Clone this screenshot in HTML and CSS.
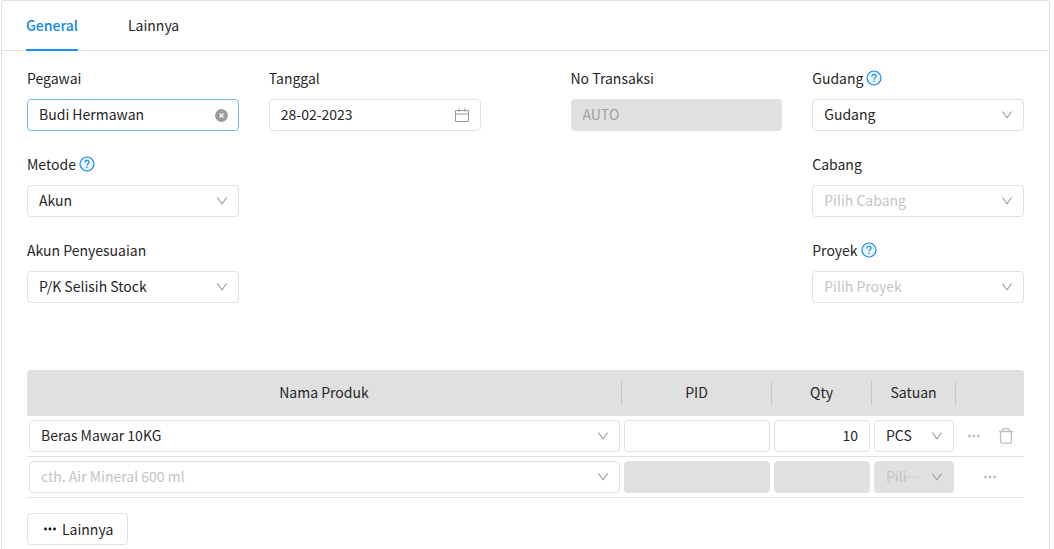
FILE: index.html
```html
<!DOCTYPE html>
<html lang="id">
<head>
<meta charset="utf-8">
<title>Penyesuaian Stok</title>
<link rel="stylesheet" href="styles.css">
</head>
<body>
<svg class="sprite" aria-hidden="true">
  <symbol id="down" viewBox="64 64 896 896"><path d="M884 256h-75c-5.100 0-9.900 2.500-12.900 6.600L512 654.200 227.900 262.600c-3-4.100-7.800-6.600-12.900-6.600h-75c-6.500 0-10.300 7.400-6.500 12.700l352.600 486.100c12.800 17.600 39 17.600 51.700 0l352.600-486.100c3.900-5.300.1-12.700-6.400-12.700z"/></symbol>
  <symbol id="help" viewBox="0 0 16 16"><circle cx="8" cy="8" r="7" fill="#e6f7ff" stroke="#1487e8" stroke-width="1.200"/><path d="M5.900 6.400C5.900 5.200 6.800 4.400 8 4.400s2.100.8 2.100 1.900c0 .9-.6 1.400-1.200 1.700-.6.300-.9.700-.9 1.400" fill="none" stroke="#1487e8" stroke-width="1.100"/><circle cx="8" cy="11.200" r=".75" fill="#1487e8"/></symbol>
  <symbol id="dots" viewBox="0 0 14 14"><circle cx="2.500" cy="7" r="1.400"/><circle cx="7" cy="7" r="1.400"/><circle cx="11.500" cy="7" r="1.400"/></symbol>
</svg>
<main class="card">
  <nav class="tabs" role="tablist">
    <button class="tab tab-active" role="tab" aria-selected="true">General</button>
    <button class="tab" role="tab" aria-selected="false">Lainnya</button>
  </nav>
  <form class="content">
    <div class="fields">
      <div class="column">
        <div class="field">
          <div class="label"><label for="pegawai">Pegawai</label></div>
          <div class="control">
            <input class="box box-focus" id="pegawai" type="text" value="Budi Hermawan">
            <button class="icon-end clear" type="button" aria-label="Hapus pegawai"><svg viewBox="0 0 14 14"><circle cx="7" cy="7" r="7" fill="#9c9c9c"/><path d="M4.900 4.900l4.200 4.200M9.100 4.900l-4.200 4.200" stroke="#fff" stroke-width="1.300"/></svg></button>
          </div>
        </div>
        <div class="field">
          <div class="label"><label for="metode">Metode</label><svg class="help"><use href="#help"/></svg></div>
          <div class="control"><select class="box" id="metode"><option>Akun</option></select><svg class="icon-end arrow"><use href="#down"/></svg></div>
        </div>
        <div class="field">
          <div class="label"><label for="akun">Akun Penyesuaian</label></div>
          <div class="control"><select class="box" id="akun"><option>P/K Selisih Stock</option></select><svg class="icon-end arrow"><use href="#down"/></svg></div>
        </div>
      </div>
      <div class="column">
        <div class="field">
          <div class="label"><label for="tanggal">Tanggal</label></div>
          <div class="control">
            <input class="box" id="tanggal" type="text" value="28-02-2023">
            <svg class="icon-end calendar" viewBox="0 0 14 14"><path d="M.5 2.500h13v11H.5zM.5 6h13M4 .2v3.600M10 .2v3.600" fill="none" stroke="#999" stroke-width="1"/></svg>
          </div>
        </div>
      </div>
      <div class="column column-third">
        <div class="field">
          <div class="label"><label for="nomor">No Transaksi</label></div>
          <div class="control"><input class="box" id="nomor" type="text" value="AUTO" disabled></div>
        </div>
      </div>
      <div class="column">
        <div class="field">
          <div class="label"><label for="gudang">Gudang</label><svg class="help"><use href="#help"/></svg></div>
          <div class="control"><select class="box" id="gudang"><option>Gudang</option></select><svg class="icon-end arrow"><use href="#down"/></svg></div>
        </div>
        <div class="field">
          <div class="label"><label for="cabang">Cabang</label></div>
          <div class="control"><select class="box box-empty" id="cabang"><option>Pilih Cabang</option></select><svg class="icon-end arrow"><use href="#down"/></svg></div>
        </div>
        <div class="field">
          <div class="label"><label for="proyek">Proyek</label><svg class="help"><use href="#help"/></svg></div>
          <div class="control"><select class="box box-empty" id="proyek"><option>Pilih Proyek</option></select><svg class="icon-end arrow"><use href="#down"/></svg></div>
        </div>
      </div>
    </div>

    <table class="items">
      <colgroup><col><col class="col-pid"><col class="col-qty"><col class="col-unit"><col class="col-actions"></colgroup>
      <thead>
        <tr><th><div class="head">Nama Produk</div></th><th><div class="head">PID</div></th><th><div class="head">Qty</div></th><th><div class="head">Satuan</div></th><th></th></tr>
      </thead>
      <tbody>
        <tr>
          <td><div class="control"><select class="box" aria-label="Nama Produk"><option>Beras Mawar 10KG</option></select><svg class="icon-end arrow"><use href="#down"/></svg></div></td>
          <td><div class="control"><input class="box" type="text" aria-label="PID"></div></td>
          <td><div class="control"><input class="box box-number" type="text" value="10" aria-label="Qty"></div></td>
          <td><div class="control"><select class="box box-unit" aria-label="Satuan"><option>PCS</option></select><svg class="icon-end arrow"><use href="#down"/></svg></div></td>
          <td><div class="actions">
            <button class="action" type="button" aria-label="Opsi baris"><svg class="dots"><use href="#dots"/></svg></button>
            <button class="action" type="button" aria-label="Hapus baris"><svg class="trash" viewBox="0 0 14 16"><path d="M0 3.500h14M3.700 3.500V2q0-1.300 1.300-1.300h4q1.300 0 1.300 1.300v1.500M1.600 3.500v10q0 1.700 1.700 1.700h7.400q1.700 0 1.700-1.700v-10" fill="none" stroke="#bfbfbf" stroke-width="1.300"/></svg></button>
          </div></td>
        </tr>
        <tr>
          <td><div class="control"><select class="box box-empty" aria-label="Nama Produk"><option>cth. Air Mineral 600 ml</option></select><svg class="icon-end arrow"><use href="#down"/></svg></div></td>
          <td><div class="control"><input class="box" type="text" aria-label="PID" disabled></div></td>
          <td><div class="control"><input class="box" type="text" aria-label="Qty" disabled></div></td>
          <td><div class="control"><select class="box box-unit box-empty" aria-label="Satuan" disabled><option>Pilih Satuan</option></select><svg class="icon-end arrow"><use href="#down"/></svg></div></td>
          <td><div class="actions"><button class="action" type="button" aria-label="Opsi baris"><svg class="dots"><use href="#dots"/></svg></button></div></td>
        </tr>
      </tbody>
    </table>
    <button class="more" type="button"><svg class="dots"><use href="#dots"/></svg>Lainnya</button>
  </form>
</main>
</body>
</html>
```

FILE: styles.css
```css
* { box-sizing: border-box; }
body {
  margin: 0 4px 0 1px;
  background: #fff;
  color: #262626;
  font: 14px/22px "Noto Sans CJK KR", "Noto Sans", sans-serif;
}
button, input, select { font: inherit; color: inherit; }
button { cursor: pointer; }
svg { display: block; }
.sprite { position: absolute; width: 0; height: 0; }

.card {
  min-height: 100vh;
  border: 1px solid #e0e0e0;
  border-bottom: 0;
  border-radius: 4px 4px 0 0;
}
.tabs {
  display: flex;
  gap: 50px;
  padding: 0 24px;
  border-bottom: 1px solid #e0e0e0;
}
.tab {
  height: 50px;
  margin-bottom: -1px;
  padding: 0;
  border: 0;
  border-bottom: 2px solid transparent;
  background: none;
}
.tab-active { color: #1487e8; border-color: #1890ff; font-weight: 500; }

.content { padding: 16px 25px 3px; }
.fields {
  display: grid;
  grid-template-columns: 1fr 1fr 30px 1fr 1fr;
  gap: 30px;
  margin-bottom: 67px;
}
.column { display: flex; flex-direction: column; gap: 22px; min-width: 0; }
.column-third { grid-column: 4; }
.label { display: flex; align-items: center; gap: 3px; margin-bottom: 10px; }
.help { width: 16px; height: 16px; }

.control { display: grid; grid-template-columns: minmax(0, 1fr); align-items: center; }
.control > * { grid-area: 1 / 1; }
.box {
  appearance: none;
  width: 100%;
  height: 32px;
  margin: 0;
  padding: 0 11px 2px;
  border: 1px solid #e0e0e0;
  border-radius: 4px;
  background: #fff;
  outline: 0;
  text-overflow: ellipsis;
}
.box-focus { border-color: #77b9e6; }
.box:disabled { background: #e0e0e0; color: #a0a0a0; opacity: 1; }
.box-empty, .box-empty:disabled { color: #c4c4c4; }
.box-number { text-align: right; }
.box-unit { padding-right: 32px; }
.icon-end { justify-self: end; margin-right: 11px; width: 12px; height: 12px; }
.arrow { pointer-events: none; fill: #999; }
.clear { width: 13px; height: 13px; padding: 0; border: 0; background: none; }
.calendar { width: 14px; height: 14px; margin-right: 12px; pointer-events: none; }

.items { width: 100%; table-layout: fixed; border-collapse: separate; border-spacing: 0; }
.col-pid { width: 150px; }
.col-qty { width: 100px; }
.col-unit { width: 84px; }
.col-actions { width: 68px; }
.items th { height: 46px; padding: 0; background: #e0e0e0; font-weight: 400; }
.items th:first-child { border-top-left-radius: 4px; }
.items th:last-child { border-top-right-radius: 4px; }
.head { padding-bottom: 2px; border-right: 1px solid #c8c8c8; }
.items td { padding: 4px 2px; border-bottom: 1px solid #e0e0e0; }
.actions { display: flex; justify-content: center; gap: 18px; }
.action { padding: 0; border: 0; background: none; }
.actions .dots { fill: #bfbfbf; }
.dots { width: 14px; height: 14px; }
.trash { width: 14px; height: 16px; }

.more {
  display: flex;
  align-items: center;
  gap: 5px;
  height: 32px;
  margin-top: 15px;
  padding: 0 14px 0 15px;
  border: 1px solid #e0e0e0;
  border-radius: 4px;
  background: #fff;
}
```
